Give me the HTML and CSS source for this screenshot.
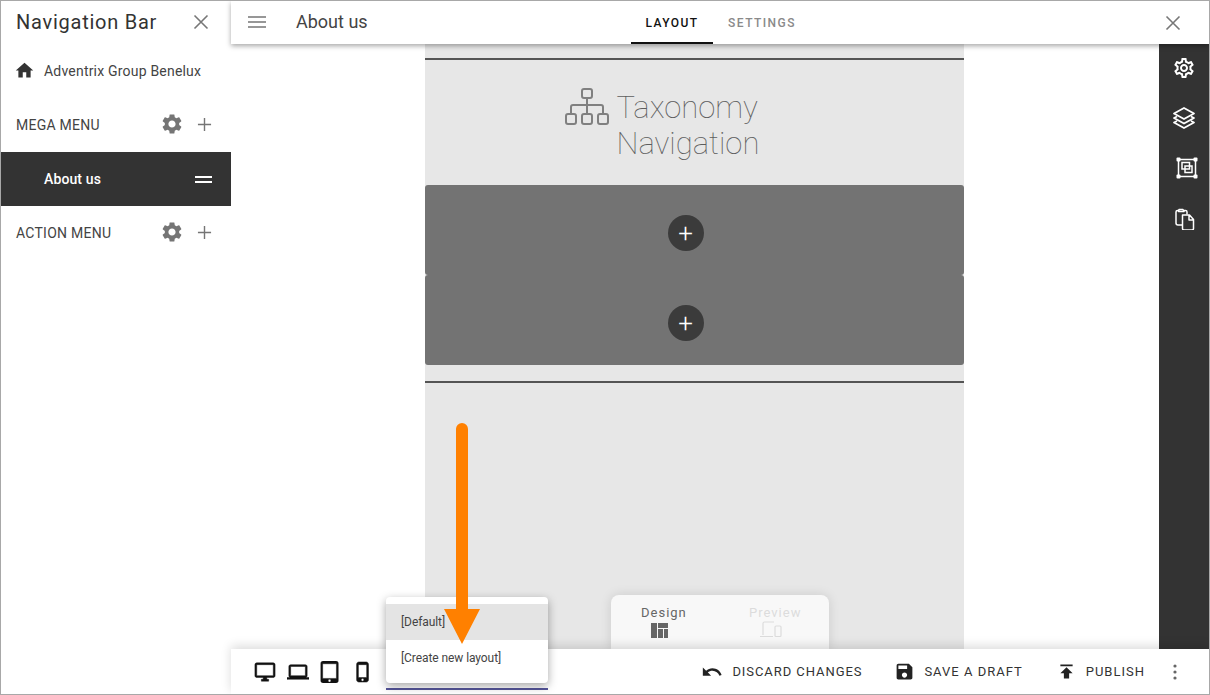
FILE: index.html
```html
<!DOCTYPE html>
<html lang="en">
<head>
<meta charset="utf-8">
<title>About us</title>
<link rel="stylesheet" href="styles.css">
</head>
<body>
<svg class="defs" aria-hidden="true">
  <symbol id="i-gear" viewBox="0 0 24 24"><path d="M19.14 12.94c.04-.3.06-.61.06-.94 0-.32-.02-.64-.07-.94l2.03-1.58c.18-.14.23-.41.12-.61l-1.92-3.32c-.12-.22-.37-.29-.59-.22l-2.39.96c-.5-.38-1.03-.7-1.62-.94l-.36-2.54c-.04-.24-.24-.41-.48-.41h-3.84c-.24 0-.43.17-.47.41l-.36 2.54c-.59.24-1.13.57-1.62.94l-2.39-.96c-.22-.08-.47 0-.59.22L2.74 8.87c-.12.21-.08.47.12.61l2.03 1.58c-.05.3-.09.63-.09.94s.02.64.07.94l-2.03 1.58c-.18.14-.23.41-.12.61l1.92 3.32c.12.22.37.29.59.22l2.39-.96c.5.38 1.03.7 1.62.94l.36 2.54c.05.24.24.41.48.41h3.84c.24 0 .44-.17.47-.41l.36-2.54c.59-.24 1.13-.56 1.62-.94l2.39.96c.22.08.47 0 .59-.22l1.92-3.32c.12-.22.07-.47-.12-.61l-2.01-1.58zM12 15.6c-1.98 0-3.6-1.62-3.6-3.6s1.62-3.6 3.6-3.6 3.6 1.62 3.6 3.6-1.62 3.6-3.6 3.6z"/></symbol>
  <symbol id="i-plus" viewBox="0 0 16 16"><path d="M8 1v14M1 8h14" fill="none" stroke="currentColor" stroke-width="1.5"/></symbol>
  <symbol id="i-close" viewBox="0 0 16 16"><path d="M1.5 1.5l13 13M14.5 1.5l-13 13" fill="none" stroke="currentColor" stroke-width="1.6"/></symbol>
</svg>

<div class="window">
  <aside class="sidebar">
    <header class="side-head">
      <span class="side-title">Navigation Bar</span>
      <svg class="close-icon"><use href="#i-close"/></svg>
    </header>
    <div class="side-row home-row">
      <svg class="home-icon" viewBox="0 0 24 24"><path d="M10 20v-6h4v6h5v-8h3L12 3 2 12h3v8z"/></svg>
      <span>Adventrix Group Benelux</span>
    </div>
    <div class="side-row menu-row">
      <span class="menu-label">MEGA MENU</span>
      <svg class="gear-icon"><use href="#i-gear"/></svg>
      <svg class="plus-icon"><use href="#i-plus"/></svg>
    </div>
    <div class="side-row active-row">
      <span class="active-label">About us</span>
      <span class="drag-handle"></span>
    </div>
    <div class="side-row menu-row">
      <span class="menu-label">ACTION MENU</span>
      <svg class="gear-icon"><use href="#i-gear"/></svg>
      <svg class="plus-icon"><use href="#i-plus"/></svg>
    </div>
  </aside>

  <div class="main">
    <header class="topbar">
      <div class="top-left">
        <svg class="burger" viewBox="0 0 18 12"><path d="M0 1h18M0 6h18M0 11h18" fill="none" stroke="currentColor" stroke-width="1.5"/></svg>
        <span class="page-name">About us</span>
      </div>
      <nav class="tabs">
        <span class="tab tab-active">LAYOUT</span>
        <span class="tab tab-second">SETTINGS</span>
      </nav>
      <svg class="close-icon top-close"><use href="#i-close"/></svg>
    </header>

    <div class="workspace">
      <div class="canvas">
        <div class="page">
          <div class="rule"></div>
          <div class="widget-title">
            <svg class="tax-icon" viewBox="0 0 44 37" fill="none" stroke="currentColor" stroke-width="2">
              <rect x="17" y="1" width="10" height="9" rx="2"/>
              <rect x="1" y="26" width="10" height="10" rx="2"/>
              <rect x="17" y="26" width="10" height="10" rx="2"/>
              <rect x="33" y="26" width="10" height="10" rx="2"/>
              <path d="M22 10v16M6 26v-7q0-2 2-2h28q2 0 2 2v7"/>
            </svg>
            <div class="tax-text">Taxonomy<br>Navigation</div>
          </div>
          <div class="zone"><span class="add-btn">+</span></div>
          <div class="zone"><span class="add-btn">+</span></div>
          <div class="rule rule-low"></div>
        </div>
        <div class="mode-card">
          <div class="mode mode-on">
            <span>Design</span>
            <svg class="mode-icon" viewBox="0 0 17 15"><path d="M0 0h6v15H0zM7 0h10v5H7zM7 6h5v9H7zM13 6h4v9h-4z"/></svg>
          </div>
          <div class="mode mode-off">
            <span>Preview</span>
            <svg class="mode-icon" viewBox="0 0 22 17" fill="none" stroke="currentColor" stroke-width="1.2"><path d="M14 1H4.500Q3 1 3 2.500V14M0 15.500h13"/><rect x="15" y="5" width="6" height="10.500" rx="1"/></svg>
          </div>
        </div>
      </div>
      <div class="rail">
        <svg class="rail-icon" viewBox="0 0 24 24" fill="currentColor"><path d="M19.43 12.98c.04-.32.07-.64.07-.98 0-.34-.03-.66-.07-.98l2.11-1.65c.19-.15.24-.42.12-.64l-2-3.46c-.09-.16-.26-.25-.44-.25-.06 0-.12.01-.17.03l-2.49 1c-.52-.4-1.08-.73-1.69-.98l-.38-2.65C14.46 2.18 14.25 2 14 2h-4c-.25 0-.46.18-.49.42l-.38 2.65c-.61.25-1.17.59-1.69.98l-2.49-1c-.06-.02-.12-.03-.18-.03-.17 0-.34.09-.43.25l-2 3.46c-.13.22-.07.49.12.64l2.11 1.65c-.04.32-.07.65-.07.98 0 .33.03.66.07.98l-2.11 1.65c-.19.15-.24.42-.12.64l2 3.46c.09.16.26.25.44.25.06 0 .12-.01.17-.03l2.49-1c.52.4 1.08.73 1.69.98l.38 2.65c.03.24.24.42.49.42h4c.25 0 .46-.18.49-.42l.38-2.65c.61-.25 1.17-.59 1.69-.98l2.49 1c.06.02.12.03.18.03.17 0 .34-.09.43-.25l2-3.46c.12-.22.07-.49-.12-.64l-2.11-1.65zm-1.98-1.71c.04.31.05.52.05.73 0 .21-.02.43-.05.73l-.14 1.13.89.7 1.08.84-.7 1.21-1.27-.51-1.04-.42-.9.68c-.43.32-.84.56-1.25.73l-1.06.43-.16 1.13-.2 1.35h-1.4l-.19-1.35-.16-1.13-1.06-.43c-.43-.18-.83-.41-1.23-.71l-.91-.7-1.06.43-1.27.51-.7-1.21 1.08-.84.89-.7-.14-1.13c-.03-.31-.05-.54-.05-.74s.02-.43.05-.73l.14-1.13-.89-.7-1.08-.84.7-1.21 1.27.51 1.04.42.9-.68c.43-.32.84-.56 1.25-.73l1.06-.43.16-1.13.2-1.35h1.39l.19 1.35.16 1.13 1.06.43c.43.18.83.41 1.23.71l.91.7 1.06-.43 1.27-.51.7 1.21-1.07.85-.89.7.14 1.13zM12 8c-2.21 0-4 1.79-4 4s1.79 4 4 4 4-1.79 4-4-1.79-4-4-4zm0 6c-1.1 0-2-.9-2-2s.9-2 2-2 2 .9 2 2-.9 2-2 2z"/></svg>
        <svg class="rail-icon" viewBox="0 0 24 24" fill="none" stroke="currentColor" stroke-width="1.800" stroke-linejoin="round"><path d="M12 2L2 7.500 12 13l10-5.500zM5 10.500l-3 1.500 10 5.500L22 12l-3-1.500M5 15l-3 1.500L12 22l10-5.500-3-1.500"/></svg>
        <svg class="rail-icon rail-icon-shift" viewBox="0 0 24 24" fill="none" stroke="currentColor" stroke-width="1.500"><path d="M3.500 3.500h17v17h-17z"/><rect x="7" y="6.500" width="7.500" height="6.500"/><rect x="10" y="10" width="7" height="6.500"/><g fill="currentColor" stroke="none"><rect x="1.500" y="1.500" width="4" height="4" rx="1"/><rect x="18.500" y="1.500" width="4" height="4" rx="1"/><rect x="1.500" y="18.500" width="4" height="4" rx="1"/><rect x="18.500" y="18.500" width="4" height="4" rx="1"/></g></svg>
        <svg class="rail-icon" viewBox="-0.5 -1.5 24 24" fill="none" stroke="currentColor" stroke-width="1.500" stroke-linejoin="round"><path d="M10 17.500H5.500q-2 0-2-2V4.500q0-1.500 1.500-1.500h1.500M6.500 2h4l1 2h-5.500zM11.500 3H13q1.500 0 1.500 1.500V7"/><path d="M10 7.500h7l4 4.500v9q0 1.500-1.500 1.500h-8q-1.500 0-1.500-1.500zM16.500 7.500v5h4.500"/></svg>
      </div>
    </div>

    <footer class="bottombar">
      <div class="devices">
        <svg class="dev" viewBox="0 0 24 24"><path d="M21 2H3c-1.100 0-2 .9-2 2v12c0 1.100.9 2 2 2h7v2H8v2h8v-2h-2v-2h7c1.100 0 2-.9 2-2V4c0-1.100-.9-2-2-2zm0 14H3V4h18v12z"/></svg>
        <svg class="dev" viewBox="0 0 24 24"><path d="M20 18c1.100 0 1.990-.9 1.990-2L22 6c0-1.100-.9-2-2-2H4c-1.100 0-2 .9-2 2v10c0 1.100.9 2 2 2H0v2h24v-2h-4zM4 6h16v10H4V6z"/></svg>
        <svg class="dev" viewBox="0 0 24 24"><path d="M18.500 0h-14C3.120 0 2 1.120 2 2.500v19C2 22.880 3.120 24 4.500 24h14c1.380 0 2.500-1.120 2.500-2.500v-19C21 1.120 19.880 0 18.500 0zm-7 23c-.83 0-1.500-.67-1.500-1.500s.67-1.500 1.500-1.500 1.500.67 1.500 1.500-.67 1.500-1.500 1.500zm7.500-4H4V3h15v16z"/></svg>
        <svg class="dev" viewBox="0 0 24 24"><path d="M15.500 1h-8C6.120 1 5 2.120 5 3.500v17C5 21.880 6.120 23 7.500 23h8c1.380 0 2.500-1.120 2.500-2.500v-17C18 2.120 16.880 1 15.500 1zm-4 21c-.83 0-1.500-.67-1.500-1.500s.67-1.500 1.500-1.500 1.500.67 1.500 1.500-.67 1.500-1.500 1.500zm4.500-4H7V4h9v14z"/></svg>
      </div>
      <div class="actions">
        <span class="action action-discard"><svg viewBox="0 0 24 24"><path d="M12.500 8c-2.650 0-5.050.99-6.900 2.600L2 7v9h9l-3.620-3.620c1.390-1.160 3.160-1.880 5.120-1.880 3.540 0 6.550 2.310 7.600 5.500l2.370-.78C21.080 11.030 17.150 8 12.500 8z"/></svg>DISCARD CHANGES</span>
        <span class="action action-save"><svg viewBox="0 0 24 24"><path d="M17 3H5c-1.110 0-2 .9-2 2v14c0 1.100.89 2 2 2h14c1.100 0 2-.9 2-2V7l-4-4zm-5 16c-1.660 0-3-1.340-3-3s1.340-3 3-3 3 1.340 3 3-1.340 3-3 3zm3-10H5V5h10v4z"/></svg>SAVE A DRAFT</span>
        <span class="action action-last"><svg viewBox="0 0 24 24"><path d="M5 4v2h14V4H5zm0 10h4v6h6v-6h4l-7-7-7 7z"/></svg>PUBLISH</span>
        <svg class="more" viewBox="0 0 4 16"><circle cx="2" cy="2" r="1.600"/><circle cx="2" cy="8" r="1.600"/><circle cx="2" cy="14" r="1.600"/></svg>
      </div>
    </footer>
  </div>

  <div class="layout-select"></div>
  <div class="dropdown">
    <div class="drop-item drop-selected">[Default]</div>
    <div class="drop-item">[Create new layout]</div>
  </div>
  <svg class="arrow" viewBox="0 0 36 222"><path d="M12 6a6 6 0 0 1 12 0v180h12l-18 35-18-35h12z"/></svg>
</div>
</body>
</html>
```
FILE: styles.css
```css
* { box-sizing: border-box; }
html, body { margin: 0; padding: 0; }
body { font-family: Roboto, "Liberation Sans", sans-serif; color: #333; background: #fff; overflow: hidden; }
.defs { position: absolute; width: 0; height: 0; }

.window { position: relative; width: 1210px; height: 695px; border: 1px solid #a8a8a8; display: flex; overflow: hidden; background: #fff; }

/* Sidebar */
.sidebar { width: 230px; flex: none; display: flex; flex-direction: column; }
.side-head { height: 43px; display: flex; align-items: center; justify-content: space-between; padding: 0 22px 2px 15px; }
.side-title { font-size: 20px; letter-spacing: .75px; color: #333; }
.close-icon { width: 16px; height: 16px; color: #777; }
.side-row { height: 54px; flex: none; display: flex; align-items: center; }
.home-row { padding-left: 13px; font-size: 14px; color: #444; letter-spacing: .2px; }
.home-icon { width: 21px; height: 21px; fill: #333; margin-right: 9px; margin-bottom: 2px; }
.menu-row { padding: 0 19px 0 15px; }
.menu-label { flex: 1; font-size: 14px; color: #444; letter-spacing: .25px; }
.gear-icon { width: 24px; height: 24px; fill: #757575; margin-right: 13px; margin-bottom: 2px; }
.plus-icon { width: 15px; height: 15px; color: #757575; margin-bottom: 2px; }
.active-row { background: #333; padding: 0 19px 0 43px; justify-content: space-between; }
.active-label { color: #fff; font-size: 14px; font-weight: 500; letter-spacing: .12px; }
.drag-handle { width: 17px; height: 7px; border-top: 2px solid #fff; border-bottom: 2px solid #fff; }

/* Main column */
.main { flex: 1; min-width: 0; display: flex; flex-direction: column; }
.topbar { position: relative; z-index: 3; height: 43px; flex: none; background: #fff; display: grid; grid-template-columns: 400px auto 1fr; align-items: stretch; box-shadow: 0 2px 5px rgba(0,0,0,.35); padding-right: 28px; }
.top-left { display: flex; align-items: center; padding: 0 0 2px 17px; }
.burger { width: 18px; height: 12px; color: #757575; }
.page-name { margin-left: 30px; font-size: 18px; color: #444; }
.tabs { display: flex; align-items: stretch; }
.tab { width: 82px; display: flex; align-items: center; justify-content: center; font-size: 12px; font-weight: 500; letter-spacing: 1.45px; color: #8a8a8a; }
.tab-second { margin-left: 8px; }
.tab-active { color: #111; border-bottom: 2px solid #111; padding-top: 2px; }
.top-close { justify-self: end; align-self: center; }

.workspace { flex: 1; min-height: 0; display: flex; }
.canvas { position: relative; flex: 1; min-width: 0; display: flex; justify-content: center; overflow: hidden; padding-right: 2px; }
.page { width: 539px; height: 100%; background: #e7e7e7; padding-top: 14px; }
.rule { height: 2px; background: #555; }
.rule-low { margin-top: 16px; }
.widget-title { height: 125px; display: flex; padding: 27px 0 0 140px; color: #808080; }
.tax-icon { width: 44px; height: 37px; flex: none; margin-top: 1px; }
.tax-text { margin: 3px 0 0 8px; font-size: 31px; line-height: 36px; font-weight: 100; color: #5c5c5c; opacity: .99; }
.zone { height: 90px; background: #737373; border-radius: 3px; display: flex; align-items: center; justify-content: center; padding: 6px 17px 0 0; }
.add-btn { width: 36px; height: 36px; border-radius: 50%; background: #3b3b3b; color: #fff; display: flex; align-items: center; justify-content: center; font-size: 26px; font-weight: 300; line-height: 1; }

.mode-card { position: absolute; left: 380px; bottom: 0; width: 218px; height: 54px; background: #f8f8f8; border-radius: 8px 8px 0 0; box-shadow: 0 0 12px rgba(0,0,0,.12); display: flex; padding-left: 30px; }
.mode { display: flex; flex-direction: column; align-items: flex-start; padding-top: 10px; font-size: 13px; letter-spacing: 1px; color: #666; }
.mode-on { width: 108px; }
.mode-off { color: #dcdcdc; }
.mode-icon { width: 17px; height: 15px; margin: 3px 0 0 10px; fill: currentColor; }
.mode-off .mode-icon { width: 22px; height: 17px; fill: none; margin: 1px 0 0 11px; }

/* Right rail */
.rail { width: 50px; flex: none; background: #333; color: #fff; display: flex; flex-direction: column; align-items: center; padding-top: 12px; gap: 26px; position: relative; z-index: 2; }
.rail-icon { width: 24px; height: 24px; flex: none; }
.rail-icon-shift { margin-left: 5px; }

/* Bottom bar */
.bottombar { position: relative; z-index: 3; height: 45px; flex: none; background: #fff; box-shadow: 0 -3px 10px rgba(0,0,0,.14); display: flex; align-items: center; justify-content: space-between; padding: 0 32px 0 23px; }
.devices { display: flex; align-items: center; gap: 10.5px; }
.dev { width: 22px; height: 22px; fill: #111; stroke: #111; stroke-width: .5; }
.actions { display: flex; align-items: center; }
.action { display: flex; align-items: center; font-size: 13px; letter-spacing: 1px; color: #333; margin-right: 32px; }
.action svg { width: 21px; height: 21px; fill: #222; margin-right: 9px; }
.action-discard { letter-spacing: .93px; }
.action-discard svg { width: 22px; height: 22px; margin-right: 9px; }
.action-save { margin-right: 33px; }
.action-last { margin-right: 28px; }
.more { width: 4px; height: 16px; fill: #666; }

/* Overlays */
.layout-select { position: absolute; z-index: 4; left: 385px; top: 687px; width: 162px; height: 2px; background: #55559a; }
.dropdown { position: absolute; z-index: 5; left: 385px; top: 596px; width: 162px; height: 86px; padding-top: 7px; background: #fff; border-radius: 4px; box-shadow: 0 3px 10px rgba(0,0,0,.35); }
.drop-item { height: 36px; display: flex; align-items: center; padding-left: 15px; font-size: 12px; letter-spacing: -.08px; color: #444; }
.drop-selected { background: #e4e4e4; }
.arrow { position: absolute; z-index: 6; left: 443px; top: 422px; width: 36px; height: 222px; fill: #ff8000; }
```
